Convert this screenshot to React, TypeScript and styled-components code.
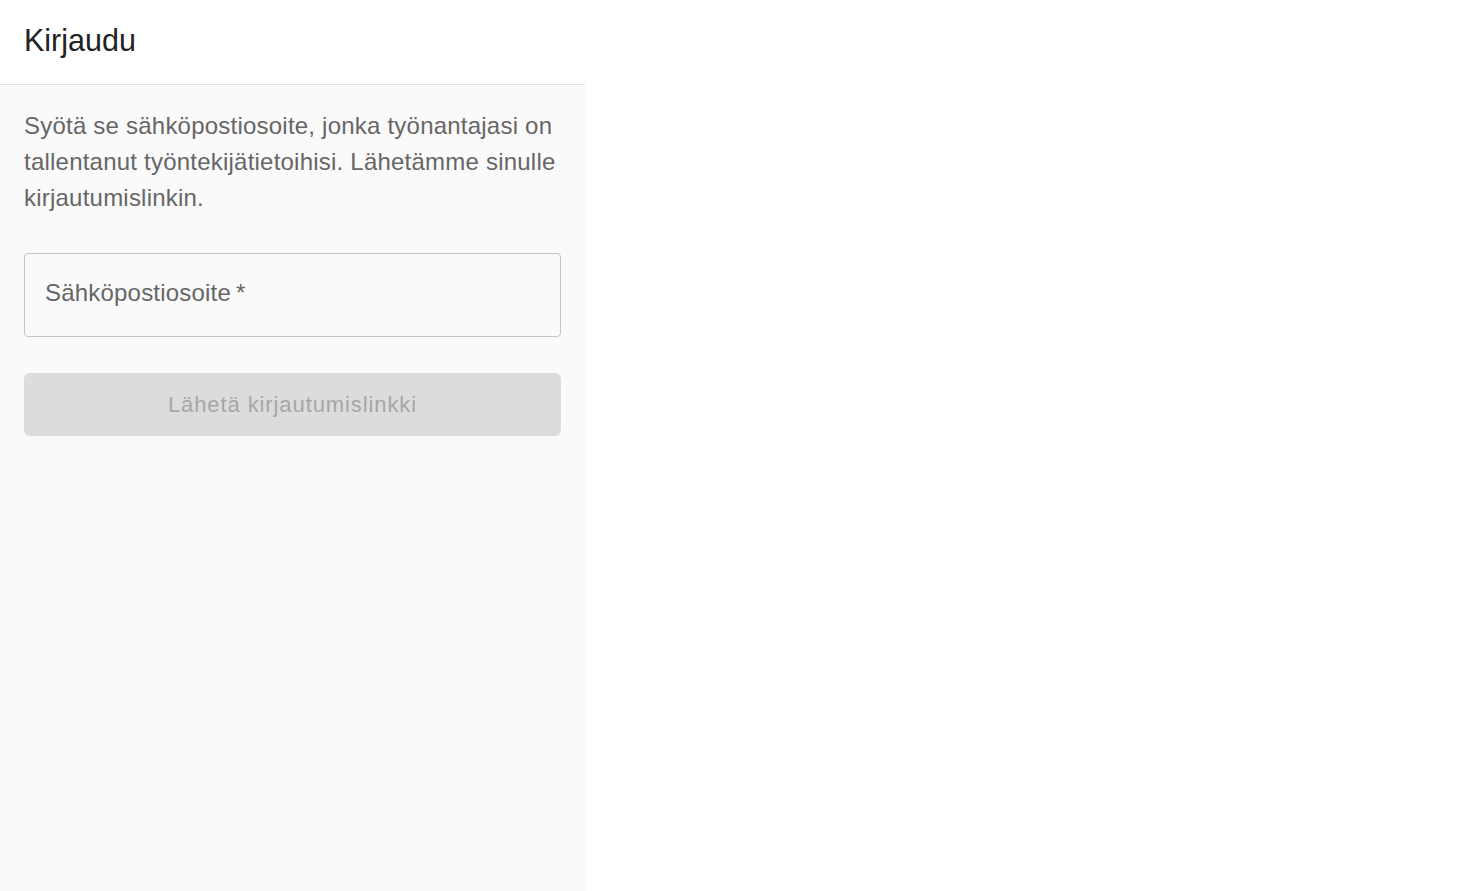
import React, { useState } from 'react';
import styled, { createGlobalStyle } from 'styled-components';

const GlobalStyle = createGlobalStyle`
  html, body {
    margin: 0;
    padding: 0;
    background: #ffffff;
    font-family: "Liberation Sans", Arial, sans-serif;
  }
  * {
    box-sizing: border-box;
  }
`;

const Page = styled.div`
  display: flex;
  min-height: 100vh;
`;

const Panel = styled.aside`
  display: flex;
  flex-direction: column;
  width: 585px;
  min-height: 100vh;
  background: #fafafa;
`;

const Header = styled.header`
  display: flex;
  align-items: center;
  height: 85px;
  padding: 0 24px 3px;
  background: #ffffff;
  border-bottom: 1px solid #e0e0e0;
`;

const Title = styled.h1`
  margin: 0;
  font-size: 30.5px;
  font-weight: 400;
  color: #222222;
`;

const Body = styled.div`
  display: flex;
  flex-direction: column;
  gap: 36px;
  padding: 23px 24px 24px;
`;

const Intro = styled.p`
  margin: 0;
  font-size: 24px;
  line-height: 36px;
  letter-spacing: 0.22px;
  color: #666666;
`;

const Field = styled.label`
  position: relative;
  display: flex;
  align-items: center;
  height: 84px;
  margin-top: 1px;
  padding: 0 20px;
  border: 1px solid #c4c4c4;
  border-radius: 4px;
  background: #fafafa;
`;

const FieldLabel = styled.span<{ $hidden: boolean }>`
  position: absolute;
  left: 20px;
  top: 24px;
  font-size: 24px;
  line-height: 30px;
  letter-spacing: 0.2px;
  color: #666666;
  pointer-events: none;
  visibility: ${({ $hidden }) => ($hidden ? 'hidden' : 'visible')};
`;

const Required = styled.span`
  margin-left: 5px;
`;

const Input = styled.input`
  width: 100%;
  border: none;
  outline: none;
  background: transparent;
  font: inherit;
  font-size: 24px;
  color: #222222;
`;

const SubmitButton = styled.button`
  height: 63px;
  border: none;
  border-radius: 6px;
  background: #dcdcdc;
  color: #a6a6a6;
  font-family: inherit;
  font-size: 22px;
  letter-spacing: 0.9px;
  cursor: default;
`;

const App: React.FC = () => {
  const [email, setEmail] = useState('');

  return (
    <>
      <GlobalStyle />
      <Page>
        <Panel>
          <Header>
            <Title>Kirjaudu</Title>
          </Header>
          <Body>
            <Intro>
              Syötä se sähköpostiosoite, jonka työnantajasi on tallentanut
              työntekijätietoihisi. Lähetämme sinulle kirjautumislinkin.
            </Intro>
            <Field>
              <FieldLabel $hidden={email.length > 0}>
                Sähköpostiosoite<Required>*</Required>
              </FieldLabel>
              <Input type="email" value={email} onChange={(e) => setEmail(e.target.value)} />
            </Field>
            <SubmitButton disabled={!email}>Lähetä kirjautumislinkki</SubmitButton>
          </Body>
        </Panel>
      </Page>
    </>
  );
};

export default App;
